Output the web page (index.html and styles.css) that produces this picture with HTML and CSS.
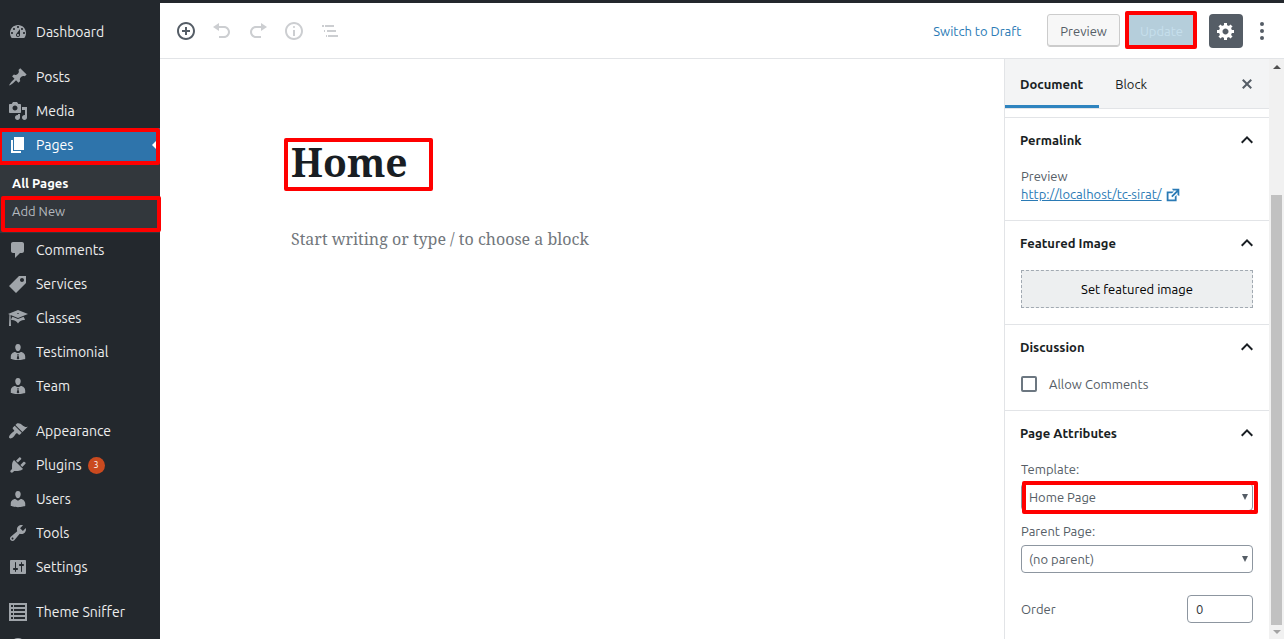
FILE: index.html
```html
<!DOCTYPE html>
<html lang="en">
<head>
  <meta charset="UTF-8">
  <meta name="viewport" content="width=device-width, initial-scale=1.0">
  <title>Edit Page</title>
  <link rel="stylesheet" href="styles.css">
</head>
<body>
  <nav class="admin-menu">
    <ul>
      <li><a href="#"><svg viewBox="0 0 20 20"><path fill-rule="evenodd" d="M3.76 16h12.48c1.1-1.37 1.76-3.11 1.76-5 0-4.42-3.58-8-8-8s-8 3.58-8 8c0 1.89.66 3.63 1.76 5zM10 4c.55 0 1 .45 1 1s-.45 1-1 1-1-.45-1-1 .45-1 1-1zM6 6c.55 0 1 .45 1 1s-.45 1-1 1-1-.45-1-1 .45-1 1-1zm8 0c.55 0 1 .45 1 1s-.45 1-1 1-1-.45-1-1 .45-1 1-1zm-5.37 5.55L12 7v6c0 1.1-.9 2-2 2s-2-.9-2-2c0-.57.24-1.08.63-1.45zM4 10c.55 0 1 .45 1 1s-.45 1-1 1-1-.45-1-1 .45-1 1-1zm12 0c.55 0 1 .45 1 1s-.45 1-1 1-1-.45-1-1 .45-1 1-1zm-5 3c0-.55-.45-1-1-1s-1 .45-1 1 .45 1 1 1 1-.45 1-1z"/></svg>Dashboard</a></li>
      <li class="separator"></li>
      <li><a href="#"><svg viewBox="0 0 20 20"><path d="M10.44 3.02l1.82-1.82 6.36 6.35-1.83 1.82c-1.05-.68-2.48-.57-3.41.36l-.75.75c-.92.93-1.04 2.35-.35 3.41l-1.83 1.82-2.41-2.41-2.8 2.79c-.42.42-3.38 2.71-3.8 2.29s1.86-3.39 2.28-3.81l2.79-2.79L4.1 9.36l1.83-1.82c1.05.69 2.48.57 3.4-.36l.75-.75c.93-.92 1.05-2.35.36-3.41z"/></svg>Posts</a></li>
      <li><a href="#"><svg viewBox="0 0 20 20"><path fill-rule="evenodd" d="M13 11V4c0-.55-.45-1-1-1h-1.67L9 1H5L3.67 3H2c-.55 0-1 .45-1 1v7c0 .55.45 1 1 1h10c.55 0 1-.45 1-1zM7 4.5c1.38 0 2.5 1.12 2.5 2.5S8.38 9.5 7 9.5 4.5 8.38 4.5 7 5.62 4.5 7 4.5zM14 6h5v10.5c0 1.38-1.12 2.5-2.5 2.5S14 17.88 14 16.5s1.12-2.5 2.5-2.5c.17 0 .34.02.5.05V9h-3V6zm-4 8.05V13h2v3.5c0 1.38-1.12 2.5-2.5 2.5S7 17.88 7 16.5 8.12 14 9.5 14c.17 0 .34.02.5.05z"/></svg>Media</a></li>
      <li class="current">
        <a href="#"><svg viewBox="0 0 20 20"><path d="M6 15V2h10v13H6zm-1 1h8v2H3V5h2v11z"/></svg>Pages</a>
        <span class="mark mark-pages"></span>
        <ul class="submenu">
          <li><a href="#" class="active">All Pages</a></li>
          <li><a href="#">Add New</a></li>
          <li class="mark mark-add"></li>
        </ul>
      </li>
      <li><a href="#"><svg viewBox="0 0 20 20"><path d="M5 2h9c1.1 0 2 .9 2 2v7c0 1.1-.9 2-2 2h-2l-5 5v-5H5c-1.1 0-2-.9-2-2V4c0-1.1.9-2 2-2z"/></svg>Comments</a></li>
      <li><a href="#"><svg viewBox="0 0 20 20"><path fill-rule="evenodd" d="M11 2h7v7L8 19l-7-7zm3 6c1.1 0 2-.9 2-2s-.9-2-2-2-2 .9-2 2 .9 2 2 2z"/></svg>Services</a></li>
      <li><a href="#"><svg viewBox="0 0 20 20"><path fill-rule="evenodd" d="M10 10L2.54 7.02 3 18H1l.48-11.41L0 6l10-4 10 4zm0-5c-.55 0-1 .22-1 .5s.45.5 1 .5 1-.22 1-.5-.45-.5-1-.5zm0 6l5.57-2.23c.71.94 1.2 2.07 1.36 3.3-.3-.04-.61-.07-.93-.07-2.55 0-4.78 1.37-6 3.41C8.78 13.37 6.55 12 4 12c-.32 0-.63.03-.93.07.16-1.23.65-2.36 1.36-3.3z"/></svg>Classes</a></li>
      <li><a href="#"><svg viewBox="0 0 20 20"><path fill-rule="evenodd" d="M10 9.25c-2.27 0-2.73-3.44-2.73-3.44C7 4.02 7.82 2 9.97 2c2.16 0 2.98 2.02 2.71 3.81 0 0-.41 3.44-2.68 3.44zM7.2 10L9 11h2l1.8-1c2.4 0 4.4 2.3 4.4 4.5V17s-3.6 1.1-7.2 1.1S2.8 17 2.8 17v-2.5C2.8 12.300 4.700 10 7.2 10zM9.2 12l.5 1-1 3.5L10 17.600l1.300-1.100-1-3.500.5-1z"/></svg>Testimonial</a></li>
      <li><a href="#"><svg viewBox="0 0 20 20"><path fill-rule="evenodd" d="M10 9.25c-2.27 0-2.73-3.44-2.73-3.44C7 4.02 7.82 2 9.97 2c2.16 0 2.98 2.02 2.71 3.81 0 0-.41 3.44-2.68 3.44zM7.2 10L9 11h2l1.8-1c2.4 0 4.4 2.3 4.4 4.5V17s-3.6 1.1-7.2 1.1S2.8 17 2.8 17v-2.5C2.8 12.300 4.700 10 7.2 10zM9.2 12l.5 1-1 3.5L10 17.600l1.300-1.100-1-3.500.5-1z"/></svg>Team</a></li>
      <li class="separator"></li>
      <li><a href="#"><svg viewBox="0 0 20 20"><path d="M14.48 11.06L7.41 3.99l1.5-1.5c.5-.56 2.3-.47 3.51.32 1.21.8 1.43 1.28 2.91 2.1 1.18.64 2.45 1.26 4.45.85zm-.71.71L6.7 4.7 4.93 6.47c-.39.39-.39 1.02 0 1.41l1.06 1.06c.39.39.39 1.03 0 1.42-.6.6-1.43 1.11-2.21 1.69-.35.26-.7.53-1.01.84C1.43 14.23.4 16.08 1.4 17.07c.99 1 2.84-.03 4.18-1.36.31-.31.58-.66.85-1.02.57-.78 1.08-1.61 1.69-2.21.39-.39 1.02-.39 1.41 0l1.06 1.06c.39.39 1.02.39 1.41 0z"/></svg>Appearance</a></li>
      <li><a href="#"><svg viewBox="0 0 20 20"><path d="M13.11 4.36L9.87 7.6 8 5.73l3.24-3.24c.35-.34 1.05-.2 1.56.32.52.51.66 1.21.31 1.55zm-8 1.77l.91-1.12 9.01 9.01-1.19.84c-.71.71-2.63 1.16-3.82 1.16H6.14L4.9 17.26c-.59.59-1.54.59-2.12 0-.59-.58-.59-1.53 0-2.12l1.24-1.24v-3.88c0-1.13.4-3.19 1.09-3.89zm7.26 3.97l3.24-3.24c.34-.35 1.04-.21 1.55.31.52.51.66 1.21.31 1.55l-3.24 3.25z"/></svg>Plugins <span class="count">3</span></a></li>
      <li><a href="#"><svg viewBox="0 0 20 20"><path d="M10 9.25c-2.27 0-2.73-3.44-2.73-3.44C7 4.02 7.82 2 9.97 2c2.16 0 2.98 2.02 2.71 3.81 0 0-.41 3.44-2.68 3.44zm0 2.57L12.72 10c2.39 0 4.52 2.33 4.52 4.53v2.49s-3.65 1.13-7.24 1.13c-3.65 0-7.24-1.13-7.24-1.13v-2.49c0-2.25 1.94-4.48 4.47-4.48z"/></svg>Users</a></li>
      <li><a href="#"><svg viewBox="0 0 20 20"><path fill-rule="evenodd" d="M16.68 9.77c-1.34 1.34-3.3 1.67-4.95.99l-5.41 6.52c-.99.99-2.59.99-3.58 0s-.99-2.59 0-3.57l6.52-5.42c-.68-1.65-.35-3.61.99-4.95 1.28-1.28 3.12-1.62 4.72-1.06l-2.89 2.89 2.82 2.82 2.86-2.87c.53 1.58.18 3.39-1.08 4.65zM3.81 16.21c.4.39 1.04.39 1.43 0 .4-.4.4-1.04 0-1.43-.39-.4-1.03-.4-1.43 0-.39.39-.39 1.03 0 1.43z"/></svg>Tools</a></li>
      <li><a href="#"><svg viewBox="0 0 20 20"><path fill-rule="evenodd" d="M18 16V4c0-.55-.45-1-1-1H3c-.55 0-1 .45-1 1v12c0 .55.45 1 1 1h14c.55 0 1-.45 1-1zM8 11h1c.55 0 1 .45 1 1s-.45 1-1 1H8v1.5c0 .28-.22.5-.5.5s-.5-.22-.5-.5V13H6c-.55 0-1-.45-1-1s.45-1 1-1h1V5.5c0-.28.22-.5.5-.5s.5.22.5.5V11zm5-2h-1c-.55 0-1-.45-1-1s.45-1 1-1h1V5.5c0-.28.22-.5.5-.5s.5.22.5.5V7h1c.55 0 1 .45 1 1s-.45 1-1 1h-1v5.5c0 .28-.22.5-.5.5s-.5-.22-.5-.5V9z"/></svg>Settings</a></li>
      <li class="separator"></li>
      <li><a href="#"><svg viewBox="0 0 20 20"><path fill-rule="evenodd" d="M1 1h18v18H1zM3 3v2h2V3zM6 3v2h11V3zM3 7v2h2V7zM6 7v2h11V7zM3 11v2h2v-2zM6 11v2h11v-2zM3 15v2h2v-2zM6 15v2h11v-2z"/></svg>Theme Sniffer</a></li>
      <li class="collapse"><a href="#"><svg viewBox="0 0 20 20"><circle cx="10" cy="10" r="8"/></svg>Collapse menu</a></li>
    </ul>
  </nav>

  <div class="editor">
    <header class="toolbar">
      <div class="tools">
        <button class="icon-btn" aria-label="Add block"><svg viewBox="0 0 20 20"><path fill-rule="evenodd" d="M10 1c-5 0-9 4-9 9s4 9 9 9 9-4 9-9-4-9-9-9zm0 16c-3.9 0-7-3.1-7-7s3.1-7 7-7 7 3.1 7 7-3.1 7-7 7zm1-11H9v3H6v2h3v3h2v-3h3V9h-3V6z"/></svg></button>
        <button class="icon-btn" aria-label="Undo" disabled><svg viewBox="0 0 20 20"><path d="M12 5H7V2L1 6l6 4V7h5c2.2 0 4 1.8 4 4s-1.8 4-4 4H7v2h5c3.3 0 6-2.7 6-6s-2.7-6-6-6z"/></svg></button>
        <button class="icon-btn" aria-label="Redo" disabled><svg viewBox="0 0 20 20"><path d="M8 5h5V2l6 4-6 4V7H8c-2.2 0-4 1.8-4 4s1.8 4 4 4h5v2H8c-3.3 0-6-2.7-6-6s2.7-6 6-6z"/></svg></button>
        <button class="icon-btn" aria-label="Content structure" disabled><svg viewBox="0 0 20 20"><path fill-rule="evenodd" d="M9 15h2V9H9v6zm1-10c-.5 0-1 .5-1 1s.5 1 1 1 1-.5 1-1-.5-1-1-1zm0-4c-5 0-9 4-9 9s4 9 9 9 9-4 9-9-4-9-9-9zm0 16c-3.9 0-7-3.1-7-7s3.1-7 7-7 7 3.1 7 7-3.1 7-7 7z"/></svg></button>
        <button class="icon-btn" aria-label="Block navigation" disabled><svg viewBox="0 0 20 20"><path d="M2 4h2v2H2zM5 4h9v2H5zM4 9h1v2H4zM7 9h9v2H7zM6 14h1v2H6zM8 14h10v2H8z"/></svg></button>
      </div>
      <div class="actions">
        <button class="link-btn">Switch to Draft</button>
        <button class="preview-btn">Preview</button>
        <div class="update-wrap">
          <button class="update-btn" disabled>Update</button>
          <span class="mark mark-update"></span>
        </div>
        <button class="gear-btn" aria-label="Settings"><svg viewBox="0 0 20 20"><path fill-rule="evenodd" d="M18 12h-2.18c-.17.7-.44 1.35-.81 1.93l1.54 1.54-2.1 2.1-1.54-1.54c-.58.36-1.23.63-1.91.79V19H8v-2.18c-.68-.16-1.33-.43-1.91-.79l-1.54 1.54-2.12-2.12 1.54-1.54c-.36-.58-.63-1.23-.79-1.91H1V9.03h2.17c.16-.7.44-1.35.8-1.94L2.43 5.55l2.1-2.1 1.54 1.54c.58-.37 1.24-.64 1.93-.81V2h3v2.18c.68.16 1.33.43 1.91.79l1.54-1.54 2.12 2.12-1.54 1.54c.36.59.64 1.24.8 1.94H18V12zm-8.5 1.5c1.66 0 3-1.34 3-3s-1.34-3-3-3-3 1.34-3 3 1.34 3 3 3z"/></svg></button>
        <button class="more-btn" aria-label="More"><svg viewBox="0 0 4 20"><circle cx="2" cy="3" r="2"/><circle cx="2" cy="10" r="2"/><circle cx="2" cy="17" r="2"/></svg></button>
      </div>
    </header>

    <div class="workspace">
      <main class="canvas">
        <h1>Home<span class="mark mark-title"></span></h1>
        <p>Start writing or type / to choose a block</p>
      </main>

      <aside class="settings">
        <div class="tabs">
          <button class="tab selected">Document</button>
          <button class="tab">Block</button>
          <button class="close" aria-label="Close settings"><svg viewBox="0 0 20 20"><path d="M14.95 6.46L11.41 10l3.54 3.54-1.41 1.41L10 11.42l-3.53 3.53-1.42-1.42L8.58 10 5.05 6.47l1.42-1.42L10 8.58l3.54-3.53z"/></svg></button>
        </div>
        <div class="scrolled"></div>

        <section class="panel">
          <h2><button>Permalink<svg viewBox="0 0 24 24"><path d="M12 8l-6 6 1.41 1.41L12 10.83l4.59 4.58L18 14z"/></svg></button></h2>
          <div class="panel-body">
            <p>Preview</p>
            <a href="#" class="permalink"><span>http://localhost/tc-sirat/</span><svg viewBox="0 0 20 20"><path d="M9 3h8v8l-2-1V6.92l-5.6 5.59-1.41-1.41L14.08 5H10zm3 12v-3l2-2v7H3V6h8L9 8H5v7h7z"/></svg></a>
          </div>
        </section>

        <section class="panel">
          <h2><button>Featured Image<svg viewBox="0 0 24 24"><path d="M12 8l-6 6 1.41 1.41L12 10.83l4.59 4.58L18 14z"/></svg></button></h2>
          <div class="panel-body">
            <button class="featured">Set featured image</button>
          </div>
        </section>

        <section class="panel">
          <h2><button>Discussion<svg viewBox="0 0 24 24"><path d="M12 8l-6 6 1.41 1.41L12 10.83l4.59 4.58L18 14z"/></svg></button></h2>
          <div class="panel-body">
            <label class="check"><input type="checkbox">Allow Comments</label>
          </div>
        </section>

        <section class="panel">
          <h2><button>Page Attributes<svg viewBox="0 0 24 24"><path d="M12 8l-6 6 1.41 1.41L12 10.83l4.59 4.58L18 14z"/></svg></button></h2>
          <div class="panel-body">
            <div class="field">
              <label for="template">Template:</label>
              <div class="select">
                <select id="template"><option>Home Page</option></select>
                <span class="mark mark-template"></span>
              </div>
            </div>
            <div class="field">
              <label for="parent">Parent Page:</label>
              <div class="select">
                <select id="parent"><option>(no parent)</option></select>
              </div>
            </div>
            <div class="order">
              <label for="order">Order</label>
              <input type="text" id="order" value="0">
            </div>
          </div>
        </section>
      </aside>

      <div class="scrollbar">
        <span class="arrow-up"></span>
        <span class="thumb"></span>
        <span class="arrow-down"></span>
      </div>
    </div>
  </div>
</body>
</html>
```

FILE: styles.css
```css
* {
  box-sizing: border-box;
}

body {
  margin: 0;
  height: 100vh;
  display: flex;
  overflow: hidden;
  background: #fff;
  color: #555d66;
  font: 13px/18px Ubuntu, "Noto Sans", sans-serif;
}

ul {
  list-style: none;
  margin: 0;
  padding: 0;
}

h1, h2, p {
  margin: 0;
}

button, input, select {
  font: inherit;
  color: inherit;
  margin: 0;
}

button {
  background: none;
  border: none;
  padding: 0;
}

svg {
  display: block;
  width: 20px;
  height: 20px;
  fill: currentColor;
  flex: none;
}

/* red highlight boxes */
.mark {
  position: absolute;
  border: 4px solid #f00;
  border-radius: 2px;
  pointer-events: none;
  z-index: 2;
}

/* admin menu */
.admin-menu {
  flex: none;
  width: 160px;
  padding-top: 15px;
  background: #23282d;
}

.admin-menu a {
  display: flex;
  align-items: center;
  gap: 8px;
  height: 34px;
  padding-left: 8px;
  color: #eee;
  font-size: 14px;
  text-decoration: none;
}

.admin-menu svg {
  color: #a0a5aa;
}

.admin-menu .collapse a {
  color: #a0a5aa;
  font-size: 13px;
}

.separator {
  height: 11px;
}

.current {
  position: relative;
}

.current > a {
  background: #2e74ab;
  color: #fff;
}

.current > a::after {
  content: "";
  margin-left: auto;
  border: 8px solid transparent;
  border-right-color: #fff;
}

.admin-menu .current svg {
  color: #fff;
}

.mark-pages {
  top: 0;
  left: -2px;
  right: 0;
  height: 37px;
}

.submenu {
  position: relative;
  padding: 7px 0 8px;
  background: #32373c;
}

.submenu a {
  height: 28px;
  padding-left: 12px;
  font-size: 13px;
  color: #b4b9be;
}

.submenu .active {
  color: #fff;
  font-weight: bold;
}

.mark-add {
  top: 34px;
  left: 1px;
  right: -1px;
  height: 36px;
}

.count {
  width: 17px;
  height: 17px;
  margin-left: -2px;
  border-radius: 50%;
  background: #ca4a1f;
  color: #fff;
  font-size: 9px;
  line-height: 17px;
  text-align: center;
}

/* editor */
.editor {
  flex: 1;
  min-width: 0;
  display: flex;
  flex-direction: column;
  border-top: 3px solid #23282d;
}

.toolbar {
  flex: none;
  display: flex;
  align-items: center;
  justify-content: space-between;
  height: 56px;
  padding: 0 19px 0 8px;
  border-bottom: 1px solid #e2e4e7;
}

.tools, .actions {
  display: flex;
  align-items: center;
}

.icon-btn {
  padding: 8px;
}

.icon-btn:disabled {
  color: #ccced1;
}

.link-btn {
  margin-right: 26px;
  color: #2a7ab5;
}

.preview-btn {
  height: 33px;
  padding: 0 12px;
  border: 1px solid #ccc;
  border-radius: 3px;
  background: #f7f7f7;
  box-shadow: inset 0 -1px 0 #ccc;
}

.update-wrap {
  position: relative;
  margin: 0 14px 0 8px;
}

.update-btn {
  height: 33px;
  padding: 0 12px;
  background: #b5cedb;
  color: #c6dfec;
}

.mark-update {
  top: -3px;
  bottom: -2px;
  left: -3px;
  right: -2px;
}

.gear-btn {
  padding: 7px;
  border-radius: 4px;
  background: #555d66;
  color: #fff;
}

.more-btn {
  padding-left: 16px;
}

.more-btn svg {
  width: 6px;
}

.workspace {
  flex: 1;
  min-height: 0;
  display: flex;
}

.canvas {
  flex: 1;
  padding: 75px 24px 0 131px;
  font-family: "Noto Serif", "DejaVu Serif Condensed", "DejaVu Serif", serif;
}

.canvas h1 {
  position: relative;
  width: max-content;
  color: #191e23;
  font-size: 39px;
  line-height: 56px;
}

.mark-title {
  top: 4px;
  left: -7px;
  right: -25px;
  height: 53px;
}

.canvas p {
  margin-top: 35px;
  color: #72777c;
  font-size: 16px;
  line-height: 28px;
}

/* settings sidebar */
.settings {
  flex: none;
  width: 265px;
  overflow: hidden;
  border-left: 1px solid #e2e4e7;
}

.tabs {
  display: flex;
  height: 50px;
  background: #f3f4f5;
  border-bottom: 1px solid #e2e4e7;
  color: #191e23;
}

.tab {
  padding: 3px 16px 0;
  border-bottom: 3px solid transparent;
}

.selected {
  padding-left: 15px;
  border-bottom-color: #2e84bf;
  font-weight: bold;
}

.close {
  margin-left: auto;
  margin-right: 12px;
  color: #555d66;
}

.scrolled {
  height: 9px;
  border-bottom: 1px solid #e2e4e7;
}

.panel {
  border-bottom: 1px solid #e2e4e7;
}

.panel:last-child {
  border-bottom: none;
}

.panel h2 {
  font-size: 13px;
}

.panel h2 button {
  display: flex;
  align-items: center;
  justify-content: space-between;
  width: 100%;
  height: 44px;
  padding: 0 10px 0 15px;
  color: #191e23;
}

.panel h2 svg {
  width: 24px;
  height: 24px;
}

.panel-body {
  padding: 5px 16px 16px;
}

.permalink {
  display: flex;
  align-items: center;
  gap: 2px;
  color: #2a7ab5;
  line-height: 19px;
}

.permalink svg {
  width: 18px;
  height: 18px;
}

.featured {
  display: block;
  width: 100%;
  height: 38px;
  border: 1px dashed #a2aab2;
  background: #edeff0;
  color: #000;
}

.check {
  display: flex;
  align-items: center;
  gap: 12px;
  height: 20px;
}

.check input {
  appearance: none;
  width: 16px;
  height: 16px;
  border: 2px solid #6c7781;
  border-radius: 2px;
}

.field {
  display: flex;
  flex-direction: column;
  gap: 5px;
  margin-bottom: 11px;
}

.select {
  position: relative;
  display: grid;
}

.select::after {
  content: "";
  grid-area: 1 / 1;
  place-self: center end;
  margin-right: 5px;
  border: 3px solid transparent;
  border-top: 6px solid #555d66;
  border-bottom: none;
}

.select select {
  grid-area: 1 / 1;
  appearance: none;
  height: 28px;
  padding: 0 7px;
  border: 1px solid #8d96a0;
  border-radius: 4px;
  background: #fff;
}

.mark-template {
  top: -2px;
  bottom: -3px;
  left: 1px;
  right: -5px;
}

.order {
  display: flex;
  align-items: center;
  justify-content: space-between;
  margin-top: 22px;
}

.order input {
  width: 66px;
  height: 28px;
  padding: 0 8px;
  border: 1px solid #8d96a0;
  border-radius: 4px;
  color: #32373c;
}

/* scrollbar */
.scrollbar {
  flex: none;
  display: flex;
  flex-direction: column;
  justify-content: space-between;
  align-items: center;
  width: 15px;
  padding: 6px 0 5px;
  background: #f1f1f1;
}

.arrow-up {
  border: 4px solid transparent;
  border-bottom-color: #505050;
  border-top: none;
}

.thumb {
  flex: 1;
  width: 11px;
  margin: 126px 0 5px;
  background: #c1c1c1;
}

.arrow-down {
  border: 4px solid transparent;
  border-top-color: #a3a3a3;
  border-bottom: none;
}
```
